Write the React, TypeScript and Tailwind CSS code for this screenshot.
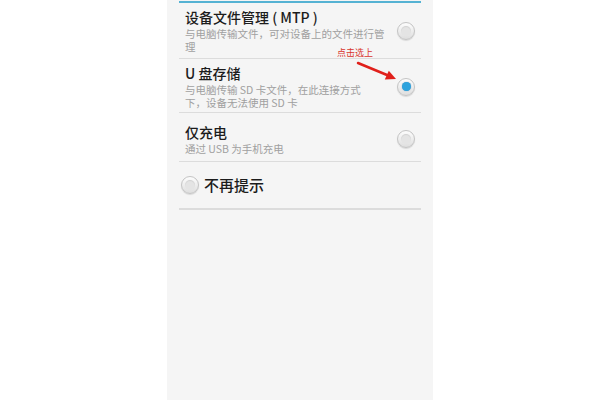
import React from 'react';

interface OptionProps {
  title: string;
  desc: string[];
  checked?: boolean;
  className?: string;
}

function Radio({ checked }: { checked?: boolean }) {
  return (
    <div className="w-[18px] h-[18px] rounded-full border border-[#c4c4c4] bg-gradient-to-b from-[#fdfdfd] to-[#dedede] shadow-[0_1px_1px_rgba(0,0,0,0.12)] flex items-center justify-center shrink-0">
      {checked ? (
        <div className="w-[9px] h-[9px] rounded-full bg-[#2ea3dd] shadow-[0_0_1px_rgba(0,80,140,0.6)]" />
      ) : (
        <div className="w-[10px] h-[10px] rounded-full bg-[#e4e4e4] shadow-[inset_0_1px_1px_rgba(0,0,0,0.08)]" />
      )}
    </div>
  );
}

function Option({ title, desc, checked, className }: OptionProps) {
  return (
    <div className={`flex items-center border-b border-[#dcdcdc] ${className ?? ''}`}>
      <div className="flex-1 min-w-0 pl-[6px]">
        <div className="text-[14px] leading-[19px] font-medium text-[#1c1c1c]">{title}</div>
        <div className="text-[10.5px] leading-[13px] text-[#a0a0a0]">
          {desc.map((d) => (
            <div key={d}>{d}</div>
          ))}
        </div>
      </div>
      <div className="w-[30px] flex justify-center">
        <Radio checked={checked} />
      </div>
    </div>
  );
}

export default function App() {
  return (
    <div
      className="w-[600px] h-[400px] bg-white flex justify-center overflow-hidden"
      style={{ fontFamily: '"Noto Sans CJK SC", "Liberation Sans", sans-serif' }}
    >
      <div className="w-[266px] h-full bg-[#f5f5f5] px-[12px]">
        <div className="h-[2px] bg-[#55b2d3] mt-[1px]" />
        <Option
          className="h-[56px]"
          title="设备文件管理 ( MTP )"
          desc={['与电脑传输文件，可对设备上的文件进行管', '理']}
        />
        <div className="relative">
          <Option
            className="h-[54px] pt-[2px]"
            title="U 盘存储"
            desc={['与电脑传输 SD 卡文件，在此连接方式', '下，设备无法使用 SD 卡']}
            checked
          />
          <div className="absolute left-[158px] top-[-11px] text-[9px] leading-[10px] text-[#d8342c]">
            点击选上
          </div>
          <svg className="absolute left-[170px] top-[-5px]" width="60" height="35" viewBox="0 0 60 35">
            <line x1="9" y1="9" x2="38" y2="21" stroke="#e0201b" strokeWidth="2.5" strokeLinecap="round" />
            <polygon points="47,25 35.8,25.4 39.8,16.8" fill="#e0201b" />
          </svg>
        </div>
        <Option className="h-[49px] pt-[3px]" title="仅充电" desc={['通过 USB 为手机充电']} />
        <div className="h-[48px] flex items-center border-b-2 border-[#dcdcdc] pl-[2px] gap-[5px]">
          <Radio />
          <span className="text-[15px] leading-[18px] font-medium text-[#1c1c1c]">不再提示</span>
        </div>
      </div>
    </div>
  );
}
